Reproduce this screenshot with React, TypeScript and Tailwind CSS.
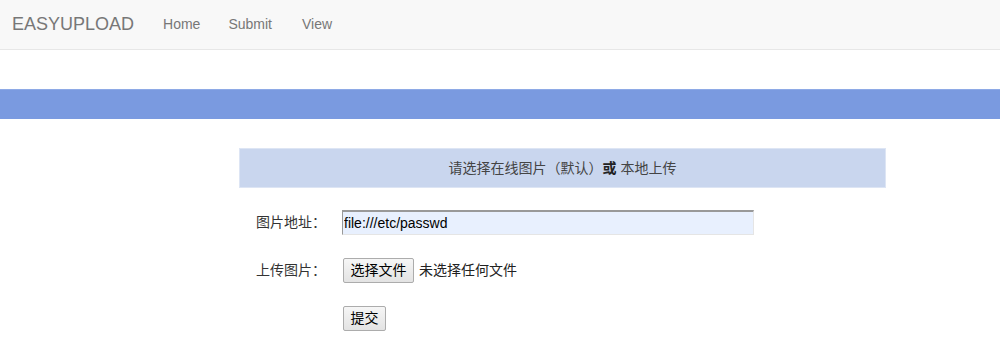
export default function App() {
  const font = { fontFamily: '"Liberation Sans", "Noto Sans CJK SC", sans-serif' };
  return (
    <div className="min-h-[347px] bg-white" style={font}>
      <div className="h-[50px] bg-[#f8f8f8] border-b border-[#e7e7e7] flex items-center">
        <span className="ml-[12px] text-[18px] text-[#777]">EASYUPLOAD</span>
        <span className="ml-[29px] text-[14px] text-[#777]">Home</span>
        <span className="ml-[28px] text-[14px] text-[#777]">Submit</span>
        <span className="ml-[30px] text-[14px] text-[#777]">View</span>
      </div>
      <div className="h-[39px]" />
      <div className="h-[30px] bg-[#7a9ae0] border-t border-[#8eaae6]" />
      <div className="ml-[239px] w-[647px] mt-[29px]">
        <div className="h-[40px] bg-[#c9d6ee] border border-[#dde5f4] flex items-center justify-center text-[14px] text-[#444]">
          请选择在线图片（默认）<b className="text-[#222]">或</b>&nbsp;本地上传
        </div>
        <div className="flex items-center mt-[22px] h-[25px]">
          <span className="w-[103px] pl-[17px] text-[14px] text-[#333]">图片地址：</span>
          <input
            className="w-[412px] h-[25px] bg-[#e8f0fe] border border-t-2 border-t-[#999] border-l-[#999] border-r-[#e5e5e5] border-b-[#e5e5e5] px-[1px] text-[14px] text-black outline-none"
            style={font}
            defaultValue="file:///etc/passwd"
          />
        </div>
        <div className="flex items-center mt-[23px] h-[25px]">
          <span className="w-[104px] pl-[17px] text-[14px] text-[#333]">上传图片：</span>
          <button className="h-[25px] w-[71px] bg-gradient-to-b from-[#f6f6f6] to-[#e3e3e3] border border-[#acacac] rounded-[2px] text-[14px] text-black">
            选择文件
          </button>
          <span className="ml-[5px] text-[14px] text-[#222]">未选择任何文件</span>
        </div>
        <div className="flex items-center mt-[23px] h-[25px]">
          <span className="w-[104px]" />
          <button className="h-[25px] w-[43px] bg-gradient-to-b from-[#f6f6f6] to-[#e3e3e3] border border-[#acacac] rounded-[2px] text-[14px] text-black">
            提交
          </button>
        </div>
      </div>
    </div>
  );
}
